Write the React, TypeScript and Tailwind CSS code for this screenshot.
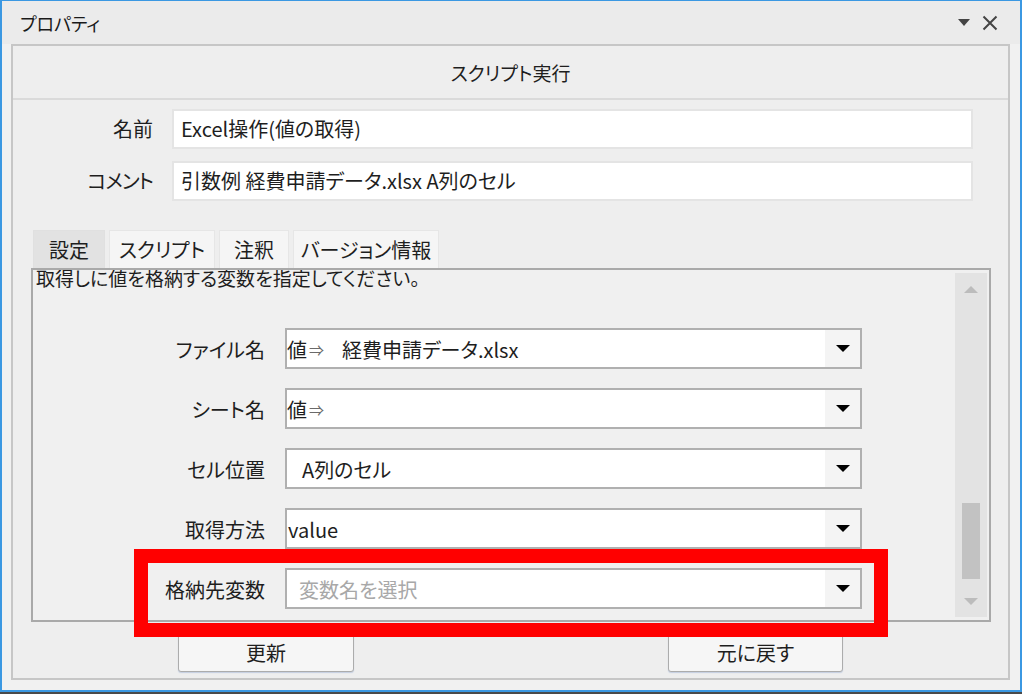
import React from 'react';

const ROWS = [
  { label: 'ファイル名', kind: 'value', prefix: true, text: '経費申請データ.xlsx' },
  { label: 'シート名', kind: 'value', prefix: true, text: '' },
  { label: 'セル位置', kind: 'plain', prefix: false, text: 'A列のセル' },
  { label: '取得方法', kind: 'value', prefix: false, text: 'value' },
  { label: '格納先変数', kind: 'placeholder', prefix: false, text: '変数名を選択' },
];

const TABS = [
  { name: '設定', w: 'w-[72px]', active: true },
  { name: 'スクリプト', w: 'w-[106px]', active: false },
  { name: '注釈', w: 'w-[70px]', active: false },
  { name: 'バージョン情報', w: 'w-[146px]', active: false },
];

function Caret({ className = '' }: { className?: string }) {
  return (
    <svg width="14" height="7" viewBox="0 0 14 7" className={className}>
      <polygon points="0,0 14,0 7,7" fill="currentColor" />
    </svg>
  );
}

function Combo({ row }: { row: (typeof ROWS)[number] }) {
  return (
    <div className="flex h-[41px] w-[577px] border-2 border-[#b0b0b0] bg-white">
      <div className="flex flex-1 items-center overflow-hidden pt-[2px] text-[20px] leading-none">
        {row.prefix && (
          <>
            <span className="text-[#1e1e1e]">値</span>
            <span className="ml-[2px] text-[15px] text-[#6a6a6a]">⇒</span>
          </>
        )}
        {row.kind === 'placeholder' ? (
          <span className="pl-[12px] text-[#a8a8a8]">{row.text}</span>
        ) : row.kind === 'plain' ? (
          <span className="pl-[15px] text-[#1e1e1e]">{row.text}</span>
        ) : (
          <span className={`text-[#1e1e1e] ${row.prefix ? 'pl-[18px]' : 'pl-[1px]'}`}>{row.text}</span>
        )}
      </div>
      <div className="flex w-[35px] items-center justify-center bg-[#f4f4f4] text-black">
        <Caret />
      </div>
    </div>
  );
}

export default function App() {
  return (
    <div className="relative h-[694px] w-[1022px] overflow-hidden bg-[#4a4a4a] font-['Noto_Sans_CJK_JP',sans-serif] text-[#1e1e1e] [font-feature-settings:'palt']">
      {/* window */}
      <div className="flex h-[692px] flex-col border-x-2 border-t border-b-2 border-[#3b98e2] bg-[#f1f1f1]">
        {/* title bar */}
        <div className="flex h-[43px] items-center justify-between bg-[#ebebeb] pl-[18px] pr-[22px]">
          <span className="text-[18px] leading-none text-[#1a1a1a]">プロパティ</span>
          <div className="flex items-center gap-[12px] text-[#444]">
            <svg width="12" height="7" viewBox="0 0 12 7">
              <polygon points="0,0 12,0 6,7" fill="currentColor" />
            </svg>
            <svg width="16" height="16" viewBox="0 0 16 16">
              <path d="M1.5 1.5 L14.5 14.5 M14.5 1.5 L1.5 14.5" stroke="currentColor" strokeWidth="2" />
            </svg>
          </div>
        </div>

        {/* property panel */}
        <div className="ml-[9px] flex h-[636px] w-[999px] flex-col border-2 border-[#c6c6c6] bg-[#eeeeee]">
          <div className="flex h-[54px] items-center justify-center border-b-2 border-[#dadada] text-[19px] leading-none">
            スクリプト実行
          </div>

          <div className="mt-[9px] flex h-[40px] items-center">
            <span className="w-[159px] pr-[19px] text-right text-[20px] leading-none">名前</span>
            <div className="flex h-full w-[801px] items-center border-2 border-[#e4e4e4] bg-white pl-[7px] text-[20px] leading-none">
              Excel操作(値の取得)
            </div>
          </div>
          <div className="mt-[12px] flex h-[40px] items-center">
            <span className="w-[159px] pr-[19px] text-right text-[20px] leading-none tracking-[-1px]">コメント</span>
            <div className="flex h-full w-[801px] items-center border-2 border-[#e4e4e4] bg-white pl-[7px] text-[20px] leading-none">
              引数例 経費申請データ.xlsx A列のセル
            </div>
          </div>

          {/* tabs */}
          <div className="ml-[20px] mt-[29px] flex h-[38px] gap-[4px]">
            {TABS.map((t) => (
              <div
                key={t.name}
                className={`flex items-center justify-center border border-b-0 text-[20px] leading-none ${t.w} ${
                  t.active ? 'border-[#e0e0e0] bg-[#e2e2e2]' : 'border-[#e6e6e6] bg-[#f5f5f5]'
                }`}
              >
                {t.name}
              </div>
            ))}
          </div>

          {/* tab content */}
          <div className="ml-[18px] flex h-[354px] w-[960px] border-2 border-[#a9a9a9] bg-[#f0f0f0]">
            <div className="flex-1 overflow-hidden">
              <p className="-mt-[3px] pl-[3px] text-[19px] leading-[22px]">取得しに値を格納する変数を指定してください。</p>
              <div className="mt-[39px] flex flex-col gap-[19px]">
                {ROWS.map((r) => (
                  <div key={r.label} className="flex items-center gap-[20px]">
                    <span className="w-[232px] pt-[2px] text-right text-[20px] leading-none">{r.label}</span>
                    <Combo row={r} />
                  </div>
                ))}
              </div>
            </div>
            {/* scrollbar */}
            <div className="my-[3px] mr-[2px] flex w-[32px] flex-col bg-[#e3e3e3]">
              <div className="flex h-[32px] items-center justify-center text-[#bcbcbc]">
                <svg width="14" height="7" viewBox="0 0 14 7">
                  <polygon points="0,7 14,7 7,0" fill="currentColor" />
                </svg>
              </div>
              <div className="flex-1" />
              <div className="mx-[7px] h-[76px] bg-[#c2c2c2]" />
              <div className="h-[6px]" />
              <div className="flex h-[32px] items-center justify-center text-[#bcbcbc]">
                <Caret />
              </div>
            </div>
          </div>

          {/* buttons */}
          <div className="ml-[165px] mt-[12px] flex h-[38px] gap-[314px]">
            <button className="w-[176px] rounded-[3px] border border-[#acacac] bg-[#f6f6f6] text-[20px] leading-none shadow-[0_1px_1px_rgba(120,150,200,0.35)]">
              更新
            </button>
            <button className="w-[175px] rounded-[3px] border border-[#acacac] bg-[#f6f6f6] text-[20px] leading-none shadow-[0_1px_1px_rgba(120,150,200,0.35)]">
              元に戻す
            </button>
          </div>
        </div>
      </div>

      {/* red annotation frame */}
      <div className="pointer-events-none absolute left-[134px] top-[549px] h-[88px] w-[754px] border-[14px] border-[#ff0000]" />
    </div>
  );
}
